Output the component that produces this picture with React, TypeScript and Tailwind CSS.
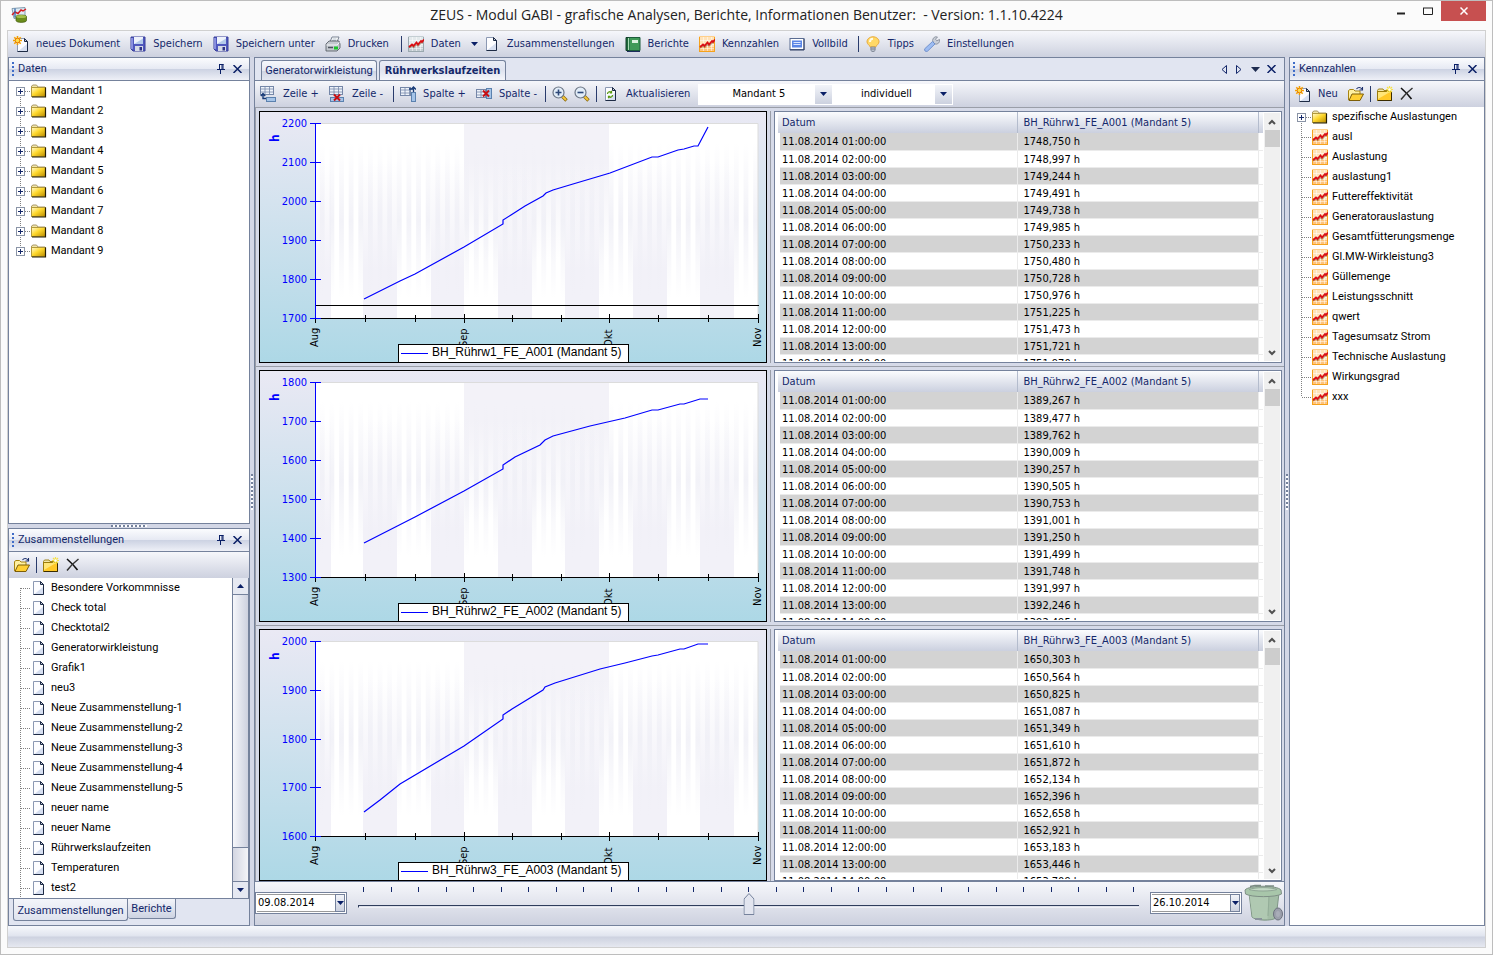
import { useState } from 'react';
import type { ReactNode } from 'react';

const MANDANTEN = [1, 2, 3, 4, 5, 6, 7, 8, 9].map(n => `Mandant ${n}`);

const ZUSAMMENSTELLUNGEN = [
  'Besondere Vorkommnisse',
  'Check total',
  'Checktotal2',
  'Generatorwirkleistung',
  'Grafik1',
  'neu3',
  'Neue Zusammenstellung-1',
  'Neue Zusammenstellung-2',
  'Neue Zusammenstellung-3',
  'Neue Zusammenstellung-4',
  'Neue Zusammenstellung-5',
  'neuer name',
  'neuer Name',
  'Rührwerkslaufzeiten',
  'Temperaturen',
  'test2',
];

const KENNZAHLEN = [
  'ausl',
  'Auslastung',
  'auslastung1',
  'Futtereffektivität',
  'Generatorauslastung',
  'Gesamtfütterungsmenge',
  'Gl.MW-Wirkleistung3',
  'Güllemenge',
  'Leistungsschnitt',
  'qwert',
  'Tagesumsatz Strom',
  'Technische Auslastung',
  'Wirkungsgrad',
  'xxx',
];

interface Series {
  name: string;
  ticks: number[];
  points: string;
  baseline?: number;
  values: string[];
}

const SERIES: Series[] = [
  {
    name: 'BH_Rührw1_FE_A001 (Mandant 5)',
    ticks: [2200, 2100, 2000, 1900, 1800, 1700],
    points:
      '105,188 141,170 156,163 205,136 244,113 244,109 252,104 266,95 284,85 287,82 294,79 314,73 341,65 351,62 393,46 399,46 419,39 425,38 435,35 439,35 449,16',
    baseline: 193,
    values: [
      '1748,750 h', '1748,997 h', '1749,244 h', '1749,491 h', '1749,738 h', '1749,985 h', '1750,233 h',
      '1750,480 h', '1750,728 h', '1750,976 h', '1751,225 h', '1751,473 h', '1751,721 h', '1751,970 h',
    ],
  },
  {
    name: 'BH_Rührw2_FE_A002 (Mandant 5)',
    ticks: [1800, 1700, 1600, 1500, 1400, 1300],
    points:
      '105,173 156,147 205,121 244,99 244,95 256,87 281,75 286,70 294,66 331,56 366,48 393,40 399,40 421,34 425,34 441,29 449,29',
    values: [
      '1389,267 h', '1389,477 h', '1389,762 h', '1390,009 h', '1390,257 h', '1390,505 h', '1390,753 h',
      '1391,001 h', '1391,250 h', '1391,499 h', '1391,748 h', '1391,997 h', '1392,246 h', '1392,495 h',
    ],
  },
  {
    name: 'BH_Rührw3_FE_A003 (Mandant 5)',
    ticks: [2000, 1900, 1800, 1700, 1600],
    points:
      '105,183 121,171 141,155 205,117 244,90 244,86 253,80 284,61 286,58 296,54 341,40 366,34 393,27 399,26 421,20 425,20 439,15 449,15',
    values: [
      '1650,303 h', '1650,564 h', '1650,825 h', '1651,087 h', '1651,349 h', '1651,610 h', '1651,872 h',
      '1652,134 h', '1652,396 h', '1652,658 h', '1652,921 h', '1653,183 h', '1653,446 h', '1653,709 h',
    ],
  },
];

/* ---------- icons ---------- */

function Icon({ children, size = 16 }: { children: ReactNode; size?: number }) {
  return (
    <svg width={size} height={size} viewBox="0 0 16 16" fill="none" className="shrink-0" aria-hidden="true">
      {children}
    </svg>
  );
}

const PageShape = () => (
  <>
    <path d="M2.500 1.500h7l3 3v10h-10z" fill="#fdfdff" stroke="#8c99b3" />
    <path d="M3.500 14h8.500V7z" fill="#d7dff0" />
    <path d="M12.500 4.500v10h-10" stroke="#1d2a44" />
    <path d="M9.500 1.500v3h3z" fill="#c4cde0" stroke="#1d2a44" />
  </>
);

const PageIcon = () => (
  <Icon>
    <PageShape />
  </Icon>
);

const Spark = () => (
  <>
    <path d="M4.500 0v9M0 4.500h9M1.300 1.300l6.400 6.400M7.700 1.300L1.300 7.700" stroke="#f5a300" strokeWidth="1.600" />
    <circle cx="4.500" cy="4.500" r="2.300" fill="#ffe04a" stroke="#e8780c" strokeWidth="1" />
  </>
);

const NewDocIcon = () => (
  <Icon>
    <g transform="translate(2 1)">
      <PageShape />
    </g>
    <Spark />
  </Icon>
);

const SaveIcon = () => (
  <Icon>
    <path d="M1 1h14v14H3l-2-2z" fill="#4f57bd" stroke="#383e9a" />
    <path d="M2 2v11" stroke="#a3a9f0" strokeWidth="1.400" />
    <rect x="4" y="1" width="9" height="7" fill="#eef2fb" />
    <path d="M4 8l9-5.500V8z" fill="#b4caea" />
    <rect x="5" y="10" width="8" height="5" fill="#d6dae6" />
    <rect x="9.500" y="11" width="2.500" height="3.500" fill="#2d3286" />
  </Icon>
);

const PrintIcon = () => (
  <Icon>
    <path d="M5 6l2-5h7l-2 5z" fill="#fff" stroke="#7a8494" />
    <path d="M7.500 3h4M7 4.500h4" stroke="#9ab" strokeWidth=".7" />
    <path d="M1 8l3-3h10l1 3v4l-3 3H1z" fill="#c3c8cf" stroke="#4c535c" strokeWidth=".8" />
    <path d="M1.500 9h10.500l2.500-2.500" stroke="#f4f6f8" />
    <path d="M3 11.500h5" stroke="#4c535c" strokeWidth="1.500" />
    <path d="M9 10.500h4v3H9z" fill="#19c42b" />
  </Icon>
);

function TrendIcon({ gray = false }: { gray?: boolean }) {
  return (
    <Icon>
      <rect width="16" height="16" fill={gray ? '#e3e9ec' : '#ffe2b8'} />
      <path d="M0 11h16v5H0z" fill={gray ? '#c3ccd2' : '#ffc47c'} />
      <path d="M4.500 0v16M8.500 0v16M12.500 0v16M0 4.500h16M0 8.500h16M0 12.500h16" stroke="#fff" strokeWidth=".7" opacity=".7" />
      <path d="M.5 .5h15" stroke={gray ? '#c4ced3' : '#ffcf8a'} />
      <path d="M.5 1v15M0 15.500h16M15.500 1v15" stroke={gray ? '#9aa8af' : '#f5a21c'} />
      <path d="M1 12l3-2 1.500 1.500L8.500 8.500l1.500 1.500L13.500 6.500 15 7" stroke="#6b3a10" strokeWidth="1.400" opacity=".45" />
      <path d="M1 11l3-2.500L5.500 10 8.500 6.500 10 8.500 13 5l1 1L16 3.500" stroke="#d90f14" strokeWidth="1.800" />
    </Icon>
  );
}

const BookIcon = () => (
  <Icon>
    <path d="M1 1.500h4v13H1z" fill="#1f6a3a" stroke="#123f2a" />
    <path d="M4 1.500h11v13H4z" fill="#3f9a58" stroke="#1c5c3c" />
    <path d="M3.500 2v12" stroke="#a9dcb5" />
    <rect x="7" y="4" width="6" height="3" fill="#d9f1de" />
    <path d="M2 15.500h13" stroke="#1c2c5c" />
  </Icon>
);

const ScreenIcon = () => (
  <Icon>
    <rect x="1" y="2.500" width="14" height="11" fill="#fff" stroke="#5a6c92" />
    <path d="M15 3v11H1" stroke="#2c3c62" />
    <rect x="3" y="4.500" width="10" height="7" fill="#5b86e6" />
    <path d="M4.500 6.500h7M4.500 8.500h7" stroke="#dbe6ff" />
  </Icon>
);

const BulbIcon = () => (
  <Icon>
    <path d="M8 .8C4.500 .8 2 3 2 5.800c0 2.500 2.800 3.400 3.300 5.200h5.400c.5-1.800 3.300-2.700 3.300-5.200C14 3 11.500 .8 8 .8z" fill="#ffd866" stroke="#e8a93c" />
    <path d="M5 6c0-2 1.200-3.300 3-3.300" stroke="#fffbe6" strokeWidth="2" />
    <path d="M5.800 11h4.400v3l-1 1.500H6.800l-1-1.500z" fill="#b9c0cc" stroke="#6f7786" strokeWidth=".7" />
    <path d="M6 13h4" stroke="#6f7786" strokeWidth=".8" />
  </Icon>
);

const WrenchIcon = () => (
  <Icon>
    <path d="M9.500 6.500a3.500 3.500 0 0 1 4-5.500l-2 2.200 1.300 1.600L15.500 3.500a3.600 3.600 0 0 1-4.500 4.500z" fill="#c9ced8" stroke="#808895" strokeWidth=".8" />
    <path d="M8.500 5.500l2.500 2.500-7.500 7.200c-1.900 1-3.700-.8-2.700-2.500z" fill="#9dbcf2" stroke="#6b8cc8" strokeWidth=".9" />
  </Icon>
);

const FolderIcon = () => (
  <Icon>
    <defs>
      <linearGradient id="folder-fill" x1="0" y1="0" x2="1" y2="1">
        <stop offset="0" stopColor="#fffbd8" />
        <stop offset=".45" stopColor="#ffd92e" />
        <stop offset="1" stopColor="#b88a00" />
      </linearGradient>
    </defs>
    <path d="M.5 4.500V3L2 2h3.500L7 4h7" fill="#f2e6a8" stroke="#a8996a" />
    <rect x=".5" y="4.500" width="14" height="9" fill="url(#folder-fill)" stroke="#b39a3c" />
    <path d="M14.500 4.500v9.500H1" stroke="#241c00" strokeWidth="1.200" />
  </Icon>
);

const OpenFolderIcon = () => (
  <Icon>
    <path d="M.5 14V4.500L2 3.500h3.500L7 5h5v3" fill="#fff0a0" stroke="#a88410" />
    <path d="M1 14.500L4 8h11.500l-3.500 6.500z" fill="#ffcf33" stroke="#7d5e08" />
    <path d="M8.500 3c1.500-2 3.800-2 5.500 0M14.500 1v3h-3" stroke="#1c2f6c" strokeWidth="1.100" />
  </Icon>
);

const NewFolderIcon = () => (
  <Icon>
    <path d="M.5 4.500L1.500 3H6l1 1.500h6v2H.5z" fill="#f2e6a8" stroke="#a08418" />
    <rect x=".5" y="5.500" width="14" height="9" fill="#ffc928" stroke="#9a7b0c" />
    <path d="M1 6h12L1 13z" fill="#ffe678" />
    <path d="M14.500 6v8.500H1" stroke="#3a2c00" />
    <path d="M12.500 0v7M9 3.500h7M10 1l5 5M15 1l-5 5" stroke="#f7e24a" strokeWidth="1.200" />
    <circle cx="12.500" cy="3.500" r="1.200" fill="#fff" />
  </Icon>
);

const DeleteIcon = () => (
  <Icon>
    <path d="M2 2c3.500 3 7 6.500 10.500 11" stroke="#111" strokeWidth="1.600" />
    <path d="M13.500 2C9 5.500 5 9.500 2 13.500" stroke="#333" strokeWidth="1.500" />
  </Icon>
);

const GridShape = ({ y = 0, w = 13 }: { y?: number; w?: number }) => (
  <>
    <rect x=".5" y={y + 0.5} width={w} height="8" fill="#eef3fa" stroke="#7587a8" />
    <path d={`M.5 ${y + 3}h${w}M.5 ${y + 6}h${w}M5 ${y + 0.5}v8M9.500 ${y + 0.5}v8`} stroke="#7587a8" strokeWidth=".8" />
  </>
);

const RedCross = ({ x, y }: { x: number; y: number }) => (
  <path d={`M${x} ${y}l6 6M${x + 6} ${y}l-6 6`} stroke="#c80f14" strokeWidth="2" />
);

const RowAddIcon = () => (
  <Icon>
    <GridShape />
    <rect x="6.500" y="11.500" width="9" height="4" fill="#a5c4e8" stroke="#5b81ae" />
    <path d="M3 7.500v5h3M.8 10L3 7.500 5.200 10" stroke="#173a77" strokeWidth="1.400" />
  </Icon>
);

const RowDelIcon = () => (
  <Icon>
    <GridShape />
    <rect x="1.500" y="11.500" width="13" height="4" fill="#a5c4e8" stroke="#5b81ae" />
    <RedCross x={5} y={8.5} />
  </Icon>
);

const ColAddIcon = () => (
  <Icon>
    <GridShape y={1} w={10} />
    <rect x="11.500" y="6.500" width="4" height="9" fill="#a5c4e8" stroke="#5b81ae" />
    <path d="M9 3h4.500v3M11 3.500L13.500 1 16 3.500" stroke="#173a77" strokeWidth="1.300" />
  </Icon>
);

const ColDelIcon = () => (
  <Icon>
    <GridShape y={3} w={9} />
    <rect x="10.500" y="2.500" width="5" height="10" fill="#a5c4e8" stroke="#5b81ae" />
    <RedCross x={7} y={4.5} />
  </Icon>
);

function ZoomIcon({ plus = false }: { plus?: boolean }) {
  return (
    <Icon>
      <path d="M10 10l4.500 4.500" stroke="#8a6a10" strokeWidth="3.400" />
      <path d="M10.500 10.500l3.500 3.500" stroke="#f4c63a" strokeWidth="2" />
      <circle cx="6.500" cy="6.500" r="5.500" fill="#e2edf8" stroke="#6e7887" strokeWidth="1.200" />
      <path d={plus ? 'M3.500 6.500h6M6.500 3.500v6' : 'M3.500 6.500h6'} stroke="#2d4878" strokeWidth="1.600" />
    </Icon>
  );
}

const RefreshIcon = () => (
  <Icon>
    <PageShape />
    <path d="M4.500 8c0-2 2-2.800 3.500-1.800M8.500 4.800v2H6.800M9.500 9c0 2-2 2.800-3.500 1.800M5.500 12.300v-2h1.700" stroke="#5a9a12" strokeWidth="1.300" />
  </Icon>
);

const AppIcon = () => (
  <Icon>
    <path d="M1 1.500l13-1v9l-11 2z" fill="#dceaf4" stroke="#6a88a0" strokeWidth=".8" />
    <path d="M1 8l3-3 3 1.500L10 3l2 1 3-2" stroke="#d81c20" strokeWidth="1.500" />
    <path d="M4 1.500v9" stroke="#2860a8" strokeWidth="1.200" />
    <path d="M5 9.500c0-2 10.500-2 10.500 0v4c0 2.500-10.500 2.500-10.500 0z" fill="#6b8d1c" stroke="#405a0c" strokeWidth=".7" />
    <ellipse cx="10.200" cy="9.500" rx="5" ry="1.600" fill="#a4c04a" />
  </Icon>
);

const PinIcon = () => (
  <svg width="8" height="10" viewBox="0 0 8 10" aria-hidden="true">
    <path d="M2 .5h4.500M2.500 0v5.500M5 0v5.500M6 0v5.500M0 5.500h8M3.500 6v4" stroke="#0a1f66" fill="none" />
  </svg>
);

const CloseIcon = () => (
  <svg width="9" height="8" viewBox="0 0 9 8" aria-hidden="true">
    <path d="M.5 0l8 8M8.500 0l-8 8" stroke="#0a1f66" strokeWidth="1.500" fill="none" />
  </svg>
);

const CaretDown = () => (
  <svg width="7" height="4" viewBox="0 0 7 4" aria-hidden="true">
    <path d="M0 0h7L3.500 4z" fill="#0a1f66" />
  </svg>
);

const Chevron = ({ down = false }: { down?: boolean }) => (
  <svg width="8" height="6" viewBox="0 0 8 6" aria-hidden="true">
    <path d={down ? 'M1 1l3 3 3-3' : 'M1 5l3-3 3 3'} stroke="#505050" strokeWidth="2" fill="none" />
  </svg>
);

function TrashIcon() {
  return (
    <svg width="40" height="38" viewBox="0 0 40 38" fill="none" className="shrink-0" aria-hidden="true">
      <path d="M5 9h30l-3 25c-4 3-20 3-24-1z" fill="#a3bda6" stroke="#7f9685" />
      <path d="M5.500 11h19l-1 24c-8 0-13-.5-15-2z" fill="#b0c9b2" />
      <path d="M25 12l-1 20" stroke="#93ad98" />
      <path d="M1 6c4-5 32-5 36 0l.5 4c-6 3.500-30 3.500-36 0z" fill="#a8c6aa" stroke="#7f8f86" />
      <path d="M5 5.500c6-2.500 22-2.500 28 0-6 2-22 2-28 0z" fill="#c2d8c4" stroke="#8fa595" />
      <path d="M6 2.500l5-1h6M21 2h9" stroke="#7b8c84" strokeWidth="1.500" />
      <path d="M11 34h7v2h-7z" fill="#8a939c" />
      <ellipse cx="34" cy="30" rx="4.500" ry="6" fill="#9b9fab" stroke="#6d727f" />
      <ellipse cx="34" cy="30" rx="2" ry="3" fill="#a9adb8" />
    </svg>
  );
}

/* ---------- small building blocks ---------- */

const Separator = () => <span className="w-px h-4 bg-[#2a3c6c] shrink-0" />;

function ToolButton({ icon, label, title }: { icon: ReactNode; label?: string; title?: string }) {
  return (
    <button type="button" title={title} aria-label={label ?? title} className="flex items-center gap-[7px] text-[#14286a] whitespace-nowrap">
      {icon}
      {label && <span>{label}</span>}
    </button>
  );
}

function PanelHeader({ title }: { title: string }) {
  return (
    <div className="h-[23px] shrink-0 flex items-center pl-[3px] pr-[7px] border-b border-[#75829c] bg-[linear-gradient(#fbfcfe,#e6e9f3_50%,#cdd3e3_52%,#eef0f7)]">
      <span className="w-[2px] h-[14px] bg-[repeating-linear-gradient(#3f6cc8_0_2px,transparent_2px_4px)]" />
      <h2 className="ml-[4px] flex-1 text-[#14286a] font-[Roboto,sans-serif]">{title}</h2>
      <button type="button" title="Fixieren" className="mr-2"><PinIcon /></button>
      <button type="button" title="Schließen"><CloseIcon /></button>
    </div>
  );
}

function FolderTools({ withNew = false }: { withNew?: boolean }) {
  return (
    <div className="h-[26px] shrink-0 flex items-center gap-[6px] px-[5px] bg-linear-to-b from-[#f6f7fb] to-[#cdd1df]">
      {withNew && (
        <span className="mr-[4px]">
          <ToolButton icon={<NewDocIcon />} label="Neu" />
        </span>
      )}
      <ToolButton icon={<OpenFolderIcon />} title="Öffnen" />
      <Separator />
      <ToolButton icon={<NewFolderIcon />} title="Neuer Ordner" />
      <ToolButton icon={<DeleteIcon />} title="Löschen" />
    </div>
  );
}

interface TreeRowProps {
  icon: ReactNode;
  label: string;
  expandable?: boolean;
  first?: boolean;
  last?: boolean;
}

function TreeRow({ icon, label, expandable, first, last }: TreeRowProps) {
  return (
    <li className="flex items-center h-5 pl-[7px]">
      <svg width="15" height="20" viewBox="0 0 15 20" fill="none" className="shrink-0" aria-hidden="true">
        <path d={`M4.500 ${first ? 10 : 0}V${last ? 10 : 20}M5 10.500h10`} stroke="#808080" strokeDasharray="1 1" />
        {expandable && (
          <>
            <rect x=".5" y="6.500" width="8" height="8" fill="#fff" stroke="#8a94a6" />
            <path d="M2 10.500h5M4.500 8v5" stroke="#14286a" />
          </>
        )}
      </svg>
      {icon}
      <span className="ml-[4px] whitespace-nowrap font-[Roboto,sans-serif]">{label}</span>
    </li>
  );
}

function Dropdown({ label, options, width }: { label: string; options: string[]; width: string }) {
  return (
    <div className={`relative h-[21px] bg-white ${width}`}>
      <select aria-label={label} className="w-full h-full pr-[14px] appearance-none bg-transparent text-center text-black outline-none">
        {options.map(o => (
          <option key={o}>{o}</option>
        ))}
      </select>
      <span className="absolute right-px inset-y-px w-[17px] flex items-center justify-center bg-linear-to-b from-[#f2f4f9] to-[#ccd1df] pointer-events-none">
        <CaretDown />
      </span>
    </div>
  );
}

function DateField({ label, initial }: { label: string; initial: string }) {
  const [value, setValue] = useState(initial);
  return (
    <div className="w-[92px] h-[22px] shrink-0 flex border border-[#75829c] bg-white p-px">
      <input
        aria-label={label}
        value={value}
        onChange={e => setValue(e.target.value)}
        className="flex-1 min-w-0 pl-px text-black outline-none border-y border-[#9a9a9a]"
      />
      <button type="button" title="Kalender" className="w-[10px] flex items-center justify-center border border-[#75829c] bg-linear-to-b from-[#f2f4f9] to-[#ccd1df]">
        <CaretDown />
      </button>
    </div>
  );
}

/* ---------- chart ---------- */

const PLOT = { left: 56, right: 499, top: 12, bottom: 207 };
const DAY = (PLOT.right - PLOT.left) / 92;
const X_TICKS = [56, 106, 156, 205, 253, 302, 350, 399, 449, 499];
const MONTHS = [
  { x: 56, label: 'Aug' },
  { x: 205, label: 'Sep' },
  { x: 350, label: 'Okt' },
  { x: 499, label: 'Nov' },
];
const WEEKS = [[56, 16], [104, 34], [172, 33], [239, 34], [306, 34], [374, 34], [441, 34]];

function Chart({ series, id }: { series: Series; id: string }) {
  const step = (PLOT.bottom - PLOT.top) / (series.ticks.length - 1);
  return (
    <div className="flex-1 min-w-0 border border-black bg-linear-to-b from-[#eae9f4] to-[#add8e6] overflow-hidden">
      <svg viewBox="1 1 506 250" className="w-full h-full" role="img" aria-label={series.name}>
        <defs>
          <linearGradient id={`${id}-top`} x1="0" y1="0" x2="0" y2="1">
            <stop offset="0" stopColor="#f3f2f8" />
            <stop offset=".2" stopColor="#f3f2f8" />
            <stop offset=".7" stopColor="#f3f2f8" stopOpacity="0" />
          </linearGradient>
          <linearGradient id={`${id}-mid`} x1="0" y1="0" x2="0" y2="1">
            <stop offset=".1" stopColor="#efeff6" stopOpacity="0" />
            <stop offset=".5" stopColor="#efeff6" stopOpacity=".8" />
            <stop offset=".9" stopColor="#efeff6" stopOpacity="0" />
          </linearGradient>
          <linearGradient id={`${id}-bottom`} x1="0" y1="0" x2="0" y2="1">
            <stop offset=".2" stopColor="#f2f1f8" stopOpacity="0" />
            <stop offset=".75" stopColor="#f2f1f8" />
          </linearGradient>
        </defs>
        <rect x={PLOT.left} y={PLOT.top} width={443} height={195} fill="#fff" />
        <rect x={205} y={PLOT.top} width={145} height={195} fill={`url(#${id}-top)`} />
        {WEEKS.map(([x, w]) => (
          <rect key={x} x={x} y={PLOT.top} width={w} height={195} fill={`url(#${id}-bottom)`} />
        ))}
        {Array.from({ length: 46 }, (_, i) => (
          <rect key={i} x={PLOT.left + (i * 2 + 1) * DAY} y={PLOT.top} width={DAY} height={195} fill={`url(#${id}-mid)`} />
        ))}
        <path d="M57 12.500h442v195" stroke="#dcdcdc" fill="none" />

        {series.baseline && <path d={`M56 ${series.baseline + 1.5}h444`} stroke="#000" />}
        <path d="M56 207.500h444" stroke="#000" />
        {X_TICKS.map(x => (
          <path key={x} d={MONTHS.some(m => m.x === x) ? `M${x + 0.5} 203v9` : `M${x + 0.5} 204v7`} stroke="#000" />
        ))}
        <path d="M56.500 12v196" stroke="#00f" />
        {series.ticks.map((t, i) => {
          const y = Math.round(PLOT.top + i * step);
          return (
            <g key={t}>
              <path d={`M51 ${y + 0.5}h11`} stroke="#00f" />
              <text x="48" y={y + 4} textAnchor="end" fill="#00f" className="text-[11px]">{t}</text>
            </g>
          );
        })}
        <text transform="translate(20 31) rotate(-90)" fill="#00f" className="text-[12px] font-bold">h</text>
        {MONTHS.map(m => (
          <text key={m.label} transform={`translate(${m.x + 3} 236) rotate(-90)`} fill="#000" className="text-[11px]">
            {m.label}
          </text>
        ))}
        <polyline points={series.points} fill="none" stroke="#00f" strokeWidth="1.200" />

        <rect x="139.500" y="233.500" width="230" height="18" fill="#fff" stroke="#000" />
        <path d="M142 242.500h27" stroke="#00f" />
        <text x="173" y="245" fill="#000" className="font-['Liberation_Sans',sans-serif] text-[12px]">{series.name}</text>
      </svg>
    </div>
  );
}

/* ---------- value table ---------- */

function ValueTable({ series }: { series: Series }) {
  return (
    <div className="flex-1 min-w-0 flex border border-[#75829c] bg-white overflow-hidden p-px pt-0">
      <div className="flex-1 min-w-0 h-full overflow-hidden">
        <table className="w-full table-fixed border-collapse">
          <thead>
            <tr className="h-[21px] bg-linear-to-b from-[#fbfcfe] to-[#cbd0df] text-[#14286a]">
              <th className="w-[239px] p-0 pl-1 text-left font-normal border-r border-[#b4bccd]">Datum</th>
              <th className="p-0 pl-[6px] text-left font-normal border-r border-[#b4bccd]">{series.name}</th>
              <th className="w-[5px] p-0" />
            </tr>
          </thead>
          <tbody>
            {series.values.map((v, i) => (
              <tr key={i} className="h-[17px] border-b border-[#ebebeb] odd:bg-[#d3d3d3] leading-[14px]">
                <td className="p-0 pt-[2px] pl-[2px] border-l-4 border-l-white border-r border-r-[#ebebeb]">
                  11.08.2014 {String(i + 1).padStart(2, '0')}:00:00
                </td>
                <td className="p-0 pt-[2px] pl-[6px]">{v}</td>
                <td className="p-0 bg-white border-l border-l-[#ebebeb]" />
              </tr>
            ))}
          </tbody>
        </table>
      </div>
      <div className="w-[17px] flex flex-col items-center justify-between bg-[#f0f0f0] border-l border-white mt-px">
        <div className="w-full flex flex-col items-center">
          <button type="button" title="Nach oben" className="h-[17px]"><Chevron /></button>
          <div className="w-[15px] h-[17px] bg-[#cdcdcd]" />
        </div>
        <button type="button" title="Nach unten" className="h-[17px]"><Chevron down /></button>
      </div>
    </div>
  );
}

/* ---------- time range ---------- */

function TimeRange() {
  const [pos, setPos] = useState(14);
  return (
    <div className="h-[43px] shrink-0 flex items-start bg-linear-to-b from-[#f6f7fb] to-[#cdd1df]">
      <div className="pt-[10px]">
        <DateField label="Von" initial="09.08.2014" />
      </div>
      <div className="relative flex-1 h-[40px] mx-[11px] pt-[5px]">
        <div className="flex justify-between px-[5px]">
          {Array.from({ length: 29 }, (_, i) => (
            <span key={i} className="w-px h-[5px] bg-[#14286a]" />
          ))}
        </div>
        <div className="mt-[13px] h-[3px] border-t border-[#2f3d5c] border-l border-b border-b-[#f0f1f6]" />
        <div className="absolute inset-x-[5px] top-[11px] h-[22px]">
          <svg width="11" height="22" viewBox="0 0 11 22" className="absolute -translate-x-1/2" style={{ left: `${(pos / 28) * 100}%` }} aria-hidden="true">
            <path d="M.5 21.500V6l5-5.500 5 5.500v15.500z" fill="#e2e5ef" stroke="#75829c" />
          </svg>
          <input
            type="range"
            aria-label="Zeitraum"
            min={0}
            max={28}
            value={pos}
            onChange={e => setPos(Number(e.target.value))}
            className="w-full h-full opacity-0"
          />
        </div>
      </div>
      <div className="pt-[10px]">
        <DateField label="Bis" initial="26.10.2014" />
      </div>
      <div className="pt-[2px] pl-[2px]">
        <TrashIcon />
      </div>
    </div>
  );
}

/* ---------- panels ---------- */

function LeftColumn() {
  return (
    <div className="w-[242px] shrink-0 flex flex-col">
      <section className="flex-1 min-h-0 flex flex-col border border-[#75829c] bg-white">
        <PanelHeader title="Daten" />
        <ul className="flex-1 min-h-0 overflow-hidden">
          {MANDANTEN.map((m, i) => (
            <TreeRow key={m} icon={<FolderIcon />} label={m} expandable first={i === 0} last={i === MANDANTEN.length - 1} />
          ))}
        </ul>
      </section>
      <div className="h-1 flex items-center justify-center">
        <span className="w-9 h-[2px] bg-[repeating-linear-gradient(90deg,#75829c_0_2px,#fff_2px_4px)]" />
      </div>
      <section className="h-[398px] flex flex-col border border-[#75829c] bg-[#e1e5f1]">
        <PanelHeader title="Zusammenstellungen" />
        <FolderTools />
        <div className="flex-1 min-h-0 flex bg-white border-b border-[#75829c]">
          <ul className="flex-1 overflow-hidden">
            {ZUSAMMENSTELLUNGEN.map((z, i) => (
              <TreeRow key={z} icon={<PageIcon />} label={z} first={i === 0} />
            ))}
          </ul>
          <div className="w-[17px] flex flex-col border-x border-[#75829c] bg-linear-to-r from-[#d3d6e2] to-[#f3f4f8]">
            <button type="button" title="Nach oben" className="h-[17px] flex items-center justify-center border-b border-[#75829c] bg-[#e6e9f2]">
              <span className="rotate-180"><CaretDown /></span>
            </button>
            <div className="h-[253px] border-b border-[#75829c] bg-linear-to-r from-[#f6f7fb] to-[#cdd1df]" />
            <span className="flex-1" />
            <button type="button" title="Nach unten" className="h-[17px] flex items-center justify-center border-t border-[#75829c] bg-[#e6e9f2]">
              <CaretDown />
            </button>
          </div>
        </div>
        <div className="h-[26px] shrink-0 flex items-start pl-1 text-[#14286a] font-[Roboto,sans-serif]">
          <button type="button" className="w-[115px] h-[22px] pt-[3px] rounded-b-[3px] border border-t-0 border-[#75829c] bg-linear-to-b from-[#f3f5fa] to-[#dfe3ee]">
            Zusammenstellungen
          </button>
          <button type="button" className="w-[48px] h-5 rounded-b-[3px] border border-t-0 border-l-0 border-[#75829c] bg-linear-to-b from-[#f3f5fa] to-[#cdd3e2]">
            Berichte
          </button>
        </div>
      </section>
    </div>
  );
}

function CenterPanel() {
  return (
    <main className="flex-1 min-w-0 flex flex-col border border-[#75829c] bg-[#d6dae8]">
      <div className="h-[23px] shrink-0 flex items-end border-b border-[#75829c] bg-[#e1e5f1] pl-[6px] pr-2 text-[#14286a]">
        <button type="button" className="w-[116px] h-5 mr-[2px] rounded-t-[3px] border border-b-0 border-[#75829c] bg-[linear-gradient(#f6f8fc,#e6e9f3_50%,#cfd5e4_55%,#e4e7f1)] font-[Roboto,sans-serif]">
          Generatorwirkleistung
        </button>
        <button type="button" className="w-[127px] h-5 rounded-t-[3px] border border-b-0 border-[#75829c] bg-[linear-gradient(#e9ecf5,#dfe3ef_50%,#f4f6fb)] font-bold">
          Rührwerkslaufzeiten
        </button>
        <span className="flex-1" />
        <div className="self-center flex items-center gap-[9px]">
          <button type="button" title="Zurück">
            <svg width="6" height="9" viewBox="0 0 6 9"><path d="M5.500 .5v8L1 4.500z" fill="none" stroke="#14286a" /></svg>
          </button>
          <button type="button" title="Weiter">
            <svg width="6" height="9" viewBox="0 0 6 9"><path d="M.5 .5v8L5 4.500z" fill="none" stroke="#14286a" /></svg>
          </button>
          <button type="button" title="Liste">
            <svg width="9" height="5" viewBox="0 0 9 5"><path d="M0 0h9L4.500 5z" fill="#1e2c50" /></svg>
          </button>
          <button type="button" title="Schließen" className="-ml-[2px]"><CloseIcon /></button>
        </div>
      </div>
      <div className="h-[27px] shrink-0 flex items-center pl-[5px] border-b border-[#9a9ea8] bg-linear-to-b from-[#f6f7fb] to-[#cdd1df] overflow-hidden">
        <div className="flex items-center gap-[10px] mr-2">
          <ToolButton icon={<RowAddIcon />} label="Zeile +" />
          <ToolButton icon={<RowDelIcon />} label="Zeile -" />
          <div className="flex items-center gap-[6px]">
            <Separator />
            <ToolButton icon={<ColAddIcon />} label="Spalte +" />
          </div>
          <ToolButton icon={<ColDelIcon />} label="Spalte -" />
        </div>
        <div className="flex items-center gap-[6px] mr-2">
          <Separator />
          <ToolButton icon={<ZoomIcon plus />} title="Vergrößern" />
          <ToolButton icon={<ZoomIcon />} title="Verkleinern" />
          <Separator />
          <ToolButton icon={<RefreshIcon />} label="Aktualisieren" />
        </div>
        <Dropdown label="Mandant" options={MANDANTEN.slice(4).concat(MANDANTEN.slice(0, 4))} width="w-[135px]" />
        <Dropdown label="Zeitraum" options={['individuell', 'Tag', 'Woche', 'Monat']} width="w-[120px]" />
      </div>
      <div className="flex-1 min-h-0 flex flex-col border-b border-[#75829c]">
        {SERIES.map((s, i) => (
          <div key={s.name} className="flex-1 min-h-0 flex border-b border-l border-[#9a9ea8] pt-[3px] pb-[3px] last:pb-0 last:border-b-0">
            <div className="flex-1 min-w-0 flex px-[3px] border-r border-[#9a9ea8]">
              <Chart series={s} id={`chart${i}`} />
            </div>
            <div className="flex-1 min-w-0 flex pl-[3px] pr-[2px]">
              <ValueTable series={s} />
            </div>
          </div>
        ))}
      </div>
      <TimeRange />
    </main>
  );
}

function RightPanel() {
  return (
    <section className="w-[196px] shrink-0 flex flex-col border border-[#75829c] bg-white">
      <PanelHeader title="Kennzahlen" />
      <FolderTools withNew />
      <ul className="flex-1 min-h-0 overflow-hidden">
        <TreeRow icon={<FolderIcon />} label="spezifische Auslastungen" expandable first />
        {KENNZAHLEN.map((k, i) => (
          <TreeRow key={k} icon={<TrendIcon />} label={k} last={i === KENNZAHLEN.length - 1} />
        ))}
      </ul>
    </section>
  );
}

const SplitGrip = () => (
  <div className="w-1 flex items-center justify-center">
    <span className="w-[2px] h-9 bg-[repeating-linear-gradient(#75829c_0_2px,#fff_2px_4px)]" />
  </div>
);

export default function App() {
  return (
    <div className="h-screen flex flex-col px-[6px] pb-[6px] border border-[#bdbdbd] bg-[#fbfbfb] text-[11px] leading-[14px] text-black font-['DejaVu_Sans_Condensed','DejaVu_Sans',sans-serif] overflow-hidden">
      <header className="h-[29px] shrink-0 flex items-start">
        <div className="w-[138px] pl-[4px] pt-[6px]"><AppIcon /></div>
        <h1 className="flex-1 pt-1 text-center text-[14px] leading-5 text-[#222] whitespace-pre font-['Open_Sans',sans-serif]">
          {'ZEUS - Modul GABI - grafische Analysen, Berichte, Informationen Benutzer:  - Version: 1.1.10.4224'}
        </h1>
        <div className="w-[138px] flex justify-end">
          <button type="button" title="Minimieren" className="w-[27px] h-5 flex justify-center items-center">
            <svg width="8" height="10" viewBox="0 0 8 10"><path d="M0 7.500h8" stroke="#222" strokeWidth="2" /></svg>
          </button>
          <button type="button" title="Maximieren" className="w-[27px] h-5 flex justify-center items-center">
            <svg width="10" height="8" viewBox="0 0 10 8"><path d="M.5 1v6.500h9V1M0 1h10" stroke="#222" fill="none" /></svg>
          </button>
          <button type="button" title="Schließen" className="w-[45px] h-5 flex justify-center items-center bg-[#c75050]">
            <svg width="8" height="8" viewBox="0 0 8 8"><path d="M.5 .5l7 7M7.500 .5l-7 7" stroke="#fff" strokeWidth="1.500" /></svg>
          </button>
        </div>
      </header>

      <div className="flex-1 min-h-0 flex flex-col border border-[#d0d0d0] bg-[#d3d7e6]">
        <nav className="h-[26px] shrink-0 flex items-center gap-[10px] pl-[5px] bg-linear-to-b from-[#f6f7fb] to-[#cdd1df] overflow-hidden">
          <ToolButton icon={<NewDocIcon />} label="neues Dokument" />
          <ToolButton icon={<SaveIcon />} label="Speichern" />
          <ToolButton icon={<SaveIcon />} label="Speichern unter" />
          <div className="flex items-center gap-3">
            <ToolButton icon={<PrintIcon />} label="Drucken" />
            <div className="flex items-center gap-[6px]">
              <Separator />
              <ToolButton icon={<TrendIcon gray />} label="Daten" />
              <span className="pl-1"><CaretDown /></span>
              <ToolButton icon={<PageIcon />} label="Zusammenstellungen" />
            </div>
          </div>
          <ToolButton icon={<BookIcon />} label="Berichte" />
          <ToolButton icon={<TrendIcon />} label="Kennzahlen" />
          <ToolButton icon={<ScreenIcon />} label="Vollbild" />
          <div className="flex items-center gap-[6px]">
            <Separator />
            <ToolButton icon={<BulbIcon />} label="Tipps" />
          </div>
          <ToolButton icon={<WrenchIcon />} label="Einstellungen" />
        </nav>

        <div className="flex-1 min-h-0 flex">
          <LeftColumn />
          <SplitGrip />
          <CenterPanel />
          <SplitGrip />
          <RightPanel />
        </div>

        <footer className="h-[21px] shrink-0 bg-[linear-gradient(#f6f8fc,#e0e4ee_48%,#cdd2e0_52%,#e6e8f0)]" />
      </div>
    </div>
  );
}
